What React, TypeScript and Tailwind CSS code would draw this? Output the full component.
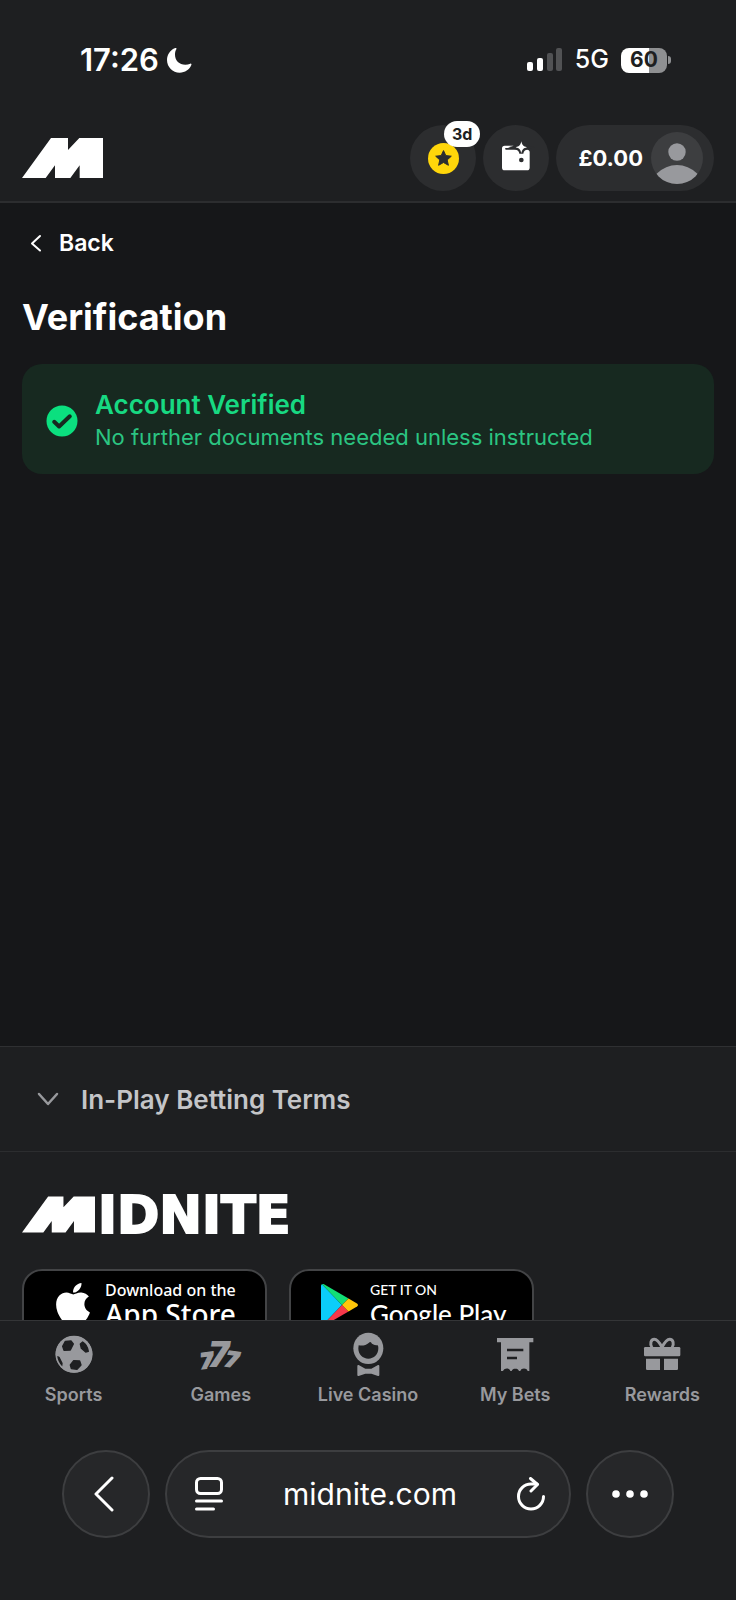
import React, { useState } from 'react';
import { FaApple } from 'react-icons/fa';

const BrandMark = ({ className }: { className: string }) => (
  <svg viewBox="0 0 243 120" fill="currentColor" className={className} aria-hidden="true">
    <path d="M0 120 87 0h51v36L172 0h71v120h-70V82l-28 38H99V82l-28 38z" />
  </svg>
);

const MoonIcon = () => (
  <svg viewBox="0 0 75 75" className="w-[25px] h-[25px]" fill="currentColor" aria-hidden="true">
    <path d="M28 1C26 0 25 0 23 1 9 7 0 21 0 36c0 21 17 38 38 38 16 0 29-9 35-23 1-2 0-5-3-4-5 2-10 3-15 3-18 0-31-13-31-30 0-6 1-11 4-16 1-1 1-2 0-3z" />
  </svg>
);

const SignalIcon = () => (
  <svg viewBox="0 0 36 24" className="w-9 h-6" aria-hidden="true">
    <rect x="0" y="14" width="6" height="9" rx="2" fill="#fff" />
    <rect x="10" y="10" width="6" height="13" rx="2" fill="#fff" />
    <rect x="20" y="5" width="6" height="18" rx="2" fill="#515254" />
    <rect x="29" y="0" width="6" height="23" rx="2" fill="#515254" />
  </svg>
);

const StarCoin = () => (
  <svg viewBox="0 0 31 31" className="w-[31px] h-[31px]" aria-hidden="true">
    <circle cx="15.5" cy="15.5" r="15.5" fill="#ffd60a" />
    <path
      d="m15.5 7.6 2.3 5 5.5.6-4.1 3.7 1.2 5.4-4.9-2.8-4.9 2.8 1.2-5.4-4.1-3.7 5.5-.6z"
      fill="#2c2d2f"
      stroke="#2c2d2f"
      strokeWidth="1"
      strokeLinejoin="round"
    />
  </svg>
);

const WalletIcon = () => (
  <svg viewBox="0 0 132 132" className="w-11 h-11" aria-hidden="true">
    <path
      d="M32 29h26v7H36c-4 0-4 5 0 5h64c4 0 7 3 7 7v47c0 5-3 8-8 8H32c-5 0-8-3-8-8V37c0-5 3-8 8-8z"
      fill="#fff"
    />
    <path
      d="M82 16c2 11 6 15 17 18-11 3-15 7-17 18-2-11-6-15-17-18 11-3 15-7 17-18z"
      fill="#fff"
      stroke="#2c2d2f"
      strokeWidth="12"
      paintOrder="stroke"
    />
    <circle cx="82" cy="72" r="7" fill="#2c2d2f" />
  </svg>
);

const Avatar = () => (
  <svg viewBox="0 0 52 52" className="w-[52px] h-[52px]" aria-hidden="true">
    <clipPath id="avatar-clip">
      <circle cx="26" cy="26" r="26" />
    </clipPath>
    <circle cx="26" cy="26" r="26" fill="#3d3e40" />
    <circle cx="26" cy="20" r="8.7" fill="#98999d" />
    <circle cx="26" cy="61" r="28" fill="#98999d" clipPath="url(#avatar-clip)" />
  </svg>
);

const CheckIcon = () => (
  <svg viewBox="0 0 32 32" className="w-8 h-8 shrink-0" aria-hidden="true">
    <circle cx="16" cy="16" r="15.5" fill="#0be07f" />
    <path d="m8.2 16.8 4.9 4.7L23.8 11.3" fill="none" stroke="#172920" strokeWidth="4" strokeLinecap="round" strokeLinejoin="round" />
  </svg>
);

const BallIcon = () => (
  <svg viewBox="0 0 132 132" className="w-11 h-11" aria-hidden="true">
    <circle cx="66" cy="64" r="55" fill="#98999d" />
    <g fill="#1e1f21" stroke="#1e1f21" strokeWidth="4" strokeLinejoin="round">
      <path d="m40 25 17-1 7 9-9 18-19 1-4-12z" />
      <path d="M92 27c10 6 15 14 17 28l-8 2-13-11-3-13z" />
      <path d="m65 83 18 1 4 12-12 13-17-2-3-11z" />
      <path d="m16 71 5 2 9 18-1 8C21 92 17 83 16 71z" />
    </g>
    <circle cx="66" cy="64" r="53" fill="none" stroke="#98999d" strokeWidth="5" />
  </svg>
);

const SevensIcon = () => (
  <svg viewBox="0 0 132 132" className="w-11 h-11 overflow-visible font-black italic" fill="#98999d" aria-hidden="true">
    <text x="4" y="105" fontSize="64" stroke="#98999d" strokeWidth="4" transform="rotate(-8 25 80)">7</text>
    <text x="80" y="103" fontSize="64" stroke="#98999d" strokeWidth="4" transform="rotate(8 105 80)">7</text>
    <text x="28" y="101" fontSize="106" stroke="#1e1f21" strokeWidth="7" paintOrder="stroke">7</text>
  </svg>
);

const CasinoIcon = () => (
  <svg viewBox="0 0 132 132" className="w-11 h-11 overflow-visible" aria-hidden="true">
    <ellipse cx="67" cy="46" rx="45" ry="47" fill="#98999d" />
    <path d="M38 37c12 2 22 0 31-8 2-3 5-3 7 0 2 4 6 6 19 8 2 3 2 6 2 9 0 18-13 31-30 31S37 64 37 46z" fill="#1e1f21" />
    <path
      d="m38 96 20 11h18l20-11q4-1 4 3v27q0 4-4 3l-20-7H58l-20 7q-4 1-4-3V99q0-4 4-3z"
      fill="#98999d"
    />
  </svg>
);

const BetsIcon = () => (
  <svg viewBox="0 0 132 132" className="w-11 h-11" aria-hidden="true">
    <path
      d="M12 15h109v13h-12v86h-5c-2-10-20-10-22 0h-4c-2-6-5-7-11-7s-9 1-11 7h-4c-2-10-18-10-22 0h-6V28H12z"
      fill="#98999d"
    />
    <path d="M42 47h49v8H42zM42 71h30v8H42z" fill="#1e1f21" />
  </svg>
);

const GiftIcon = () => (
  <svg viewBox="0 0 132 132" className="w-11 h-11" fill="#98999d" aria-hidden="true">
    <rect x="12" y="42" width="109" height="28" rx="4" />
    <path d="M18 77h42v34H22c-2 0-4-2-4-4zM72 77h42v30c0 2-2 4-4 4H72z" />
    <path
      d="M66 43C58 28 51 19 43 19c-11 0-14 14-7 24M66 43c8-15 15-24 23-24 11 0 14 14 7 24"
      fill="none"
      stroke="#98999d"
      strokeWidth="9"
    />
  </svg>
);

const PlayLogo = () => (
  <svg viewBox="0 0 37 42" className="w-[37px] h-[42px]" aria-hidden="true">
    <path d="M0 2v38c0 1 .5 1.6 1 1.8L21 21 1 .2C.4.5 0 1 0 2z" fill="#0bcdfa" />
    <path d="M1 .2c.6-.3 1.3-.3 2 .1L27.5 14.5 21 21z" fill="#12df76" />
    <path d="M1 41.8c.6.3 1.3.3 2-.1L27.5 27.5 21 21z" fill="#f5384a" />
    <path d="M27.5 14.5 36 19.4c1.3.8 1.3 2.4 0 3.2l-8.5 4.9L21 21z" fill="#ffc60a" />
  </svg>
);

const tabs = [
  { label: 'Sports', icon: <BallIcon /> },
  { label: 'Games', icon: <SevensIcon /> },
  { label: 'Live Casino', icon: <CasinoIcon /> },
  { label: 'My Bets', icon: <BetsIcon /> },
  { label: 'Rewards', icon: <GiftIcon /> },
];

const StatusBar = () => (
  <div className="h-[120px] flex items-center justify-between pl-20 pr-[65px]">
    <div className="flex items-center gap-2">
      <span className="text-[31px] font-semibold">17:26</span>
      <MoonIcon />
    </div>
    <div className="flex items-center gap-3">
      <SignalIcon />
      <span className="text-[25px] font-medium">5G</span>
      <div className="flex items-center gap-px">
        <div className="w-[46px] h-[25px] rounded-lg bg-linear-to-r from-white from-60% to-[#8f9092] to-60% flex items-center justify-center text-[21px] font-bold text-[#1e1f21]">
          60
        </div>
        <div className="w-[3px] h-2 rounded-r-full bg-[#8f9092]" />
      </div>
    </div>
  </div>
);

const Header = () => (
  <header className="flex items-center justify-between px-[22px] pt-[5px] pb-[10px] border-b-2 border-[#2c2d2f]">
    <a href="#home" aria-label="Midnite home">
      <BrandMark className="w-[81px] h-10" />
    </a>
    <div className="flex items-center gap-[7px]">
      <button aria-label="Daily reward" className="relative w-[66px] h-[66px] rounded-full bg-[#2c2d2f] flex items-center justify-center">
        <StarCoin />
        <span className="absolute -top-1 -right-1 h-[26px] px-2 rounded-full bg-white flex items-center text-base font-bold text-[#1e1f21]">
          3d
        </span>
      </button>
      <button aria-label="Wallet" className="w-[66px] h-[66px] rounded-full bg-[#2c2d2f] flex items-center justify-center">
        <WalletIcon />
      </button>
      <button aria-label="Account" className="h-[66px] pl-[22px] pr-[11px] rounded-full bg-[#2c2d2f] flex items-center gap-2">
        <span className="text-[22px] font-bold">£0.00</span>
        <Avatar />
      </button>
    </div>
  </header>
);

const SiteFooter = () => {
  const [open, setOpen] = useState(false);

  return (
    <footer className="bg-[#1e1f21] border-t border-[#2f3032]">
      <button
        aria-expanded={open}
        onClick={() => setOpen(!open)}
        className="w-full h-[104px] px-9 flex items-center gap-[21px] text-[#c4c5c8]"
      >
        <svg viewBox="0 0 24 24" className="w-6 h-6" fill="none" stroke="#98999d" strokeWidth="2.5" strokeLinecap="round" strokeLinejoin="round" aria-hidden="true">
          <path d="m3 7 9 10 9-10" />
        </svg>
        <span className="text-[26px] font-semibold">In-Play Betting Terms</span>
      </button>
      <div className="border-t border-[#2c2d2f] px-[22px] pt-11">
        <a href="#home" aria-label="Midnite" className="flex items-start gap-[3px] h-[37px]">
          <BrandMark className="w-[73px] h-[37px]" />
          <span className="text-[51px] leading-10 font-bold font-['DejaVu_Sans',sans-serif] [-webkit-text-stroke:2px_white]">
            IDNITE
          </span>
        </a>
        <div className="mt-9 h-[51px] overflow-hidden flex items-start gap-[22px]">
          <a href="#app-store" className="w-[245px] h-[73px] shrink-0 rounded-[20px] border-2 border-[#434446] bg-black flex items-start pl-[26px] pt-[9px]">
            <FaApple size={46} />
            <span className="flex flex-col pl-[9px] font-['Noto_Sans',sans-serif]">
              <span className="text-base leading-5 font-medium">Download on the</span>
              <span className="text-[28px] leading-7 font-medium">App Store</span>
            </span>
          </a>
          <a href="#google-play" className="w-[245px] h-[73px] shrink-0 rounded-[20px] border-2 border-[#434446] bg-black flex items-start pl-[30px] pt-[9px]">
            <span className="pt-1">
              <PlayLogo />
            </span>
            <span className="flex flex-col pl-3 font-['Lato',sans-serif]">
              <span className="text-sm leading-5 font-medium">GET IT ON</span>
              <span className="text-[26px] leading-7 font-medium">Google Play</span>
            </span>
          </a>
        </div>
      </div>
    </footer>
  );
};

const TabBar = () => (
  <nav className="grid grid-cols-5 border-t border-[#343537] pt-3">
    {tabs.map((tab) => (
      <a key={tab.label} href="#tab" className="flex flex-col items-center gap-1.5 text-[#98999d]">
        {tab.icon}
        <span className="text-[18px] leading-6 font-semibold">{tab.label}</span>
      </a>
    ))}
  </nav>
);

const BrowserBar = () => (
  <div className="flex items-center gap-[15px] px-[62px] pt-[43px] pb-[62px]">
    <button aria-label="Go back" className="w-[88px] h-[88px] shrink-0 rounded-full border-2 border-[#3d3e40] bg-[#262729] flex items-center justify-center">
      <svg viewBox="0 0 24 36" className="w-6 h-9" fill="none" stroke="#fff" strokeWidth="3" strokeLinecap="round" strokeLinejoin="round" aria-hidden="true">
        <path d="M18 2 2 18l16 16" />
      </svg>
    </button>
    <div className="flex-1 min-w-0 h-[88px] pl-7 pr-6 rounded-full border-2 border-[#3d3e40] bg-[#262729] flex items-center">
      <button aria-label="Page menu">
        <svg viewBox="0 0 28 34" className="w-7 h-[34px]" fill="none" stroke="#fff" strokeWidth="3" strokeLinecap="round" aria-hidden="true">
          <rect x="1.5" y="1.5" width="25" height="15" rx="4" />
          <path d="M1.5 24h25M1.5 32h17" />
        </svg>
      </button>
      <input
        aria-label="Address"
        defaultValue="midnite.com"
        className="flex-1 min-w-0 bg-transparent text-center text-[30px] outline-none"
      />
      <button aria-label="Reload">
        <svg viewBox="0 0 28 34" className="w-7 h-[34px]" fill="none" stroke="#fff" strokeWidth="3" strokeLinecap="round" strokeLinejoin="round" aria-hidden="true">
          <path d="M26.5 19.5A12.5 12.5 0 1 1 14 7h6" />
          <path d="m13.5 1.5 7 6-6.5 6.5" />
        </svg>
      </button>
    </div>
    <button aria-label="More" className="w-[88px] h-[88px] shrink-0 rounded-full border-2 border-[#3d3e40] bg-[#262729] flex items-center justify-center">
      <svg viewBox="0 0 36 8" className="w-9 h-2" fill="#fff" aria-hidden="true">
        <circle cx="4" cy="4" r="3.8" />
        <circle cx="18" cy="4" r="3.8" />
        <circle cx="32" cy="4" r="3.8" />
      </svg>
    </button>
  </div>
);

export default function App() {
  return (
    <div className="h-screen flex flex-col bg-[#1e1f21] text-white font-[Inter,sans-serif]">
      <StatusBar />
      <Header />

      <div className="flex-1 min-h-0 overflow-hidden flex flex-col bg-[#161719]">
        <main className="flex-1 px-[22px] pt-6">
          <button className="h-8 pl-2 flex items-center gap-[17px] text-[23px] font-semibold">
            <svg viewBox="0 0 12 18" className="w-3 h-[18px]" fill="none" stroke="currentColor" strokeWidth="2" strokeLinecap="round" strokeLinejoin="round" aria-hidden="true">
              <path d="M10 2 2 9.5l8 7" />
            </svg>
            Back
          </button>
          <h1 className="mt-9 text-[36px] leading-[44px] font-bold">Verification</h1>
          <section className="mt-[25px] px-6 pt-[25px] pb-[21px] rounded-[20px] bg-[#172920] flex items-center gap-[17px]">
            <CheckIcon />
            <div>
              <h2 className="text-[26px] leading-8 font-semibold text-[#17d982]">Account Verified</h2>
              <p className="text-[22px] leading-8 text-[#2bc582]">No further documents needed unless instructed</p>
            </div>
          </section>
        </main>
        <SiteFooter />
      </div>

      <TabBar />
      <BrowserBar />
    </div>
  );
}
